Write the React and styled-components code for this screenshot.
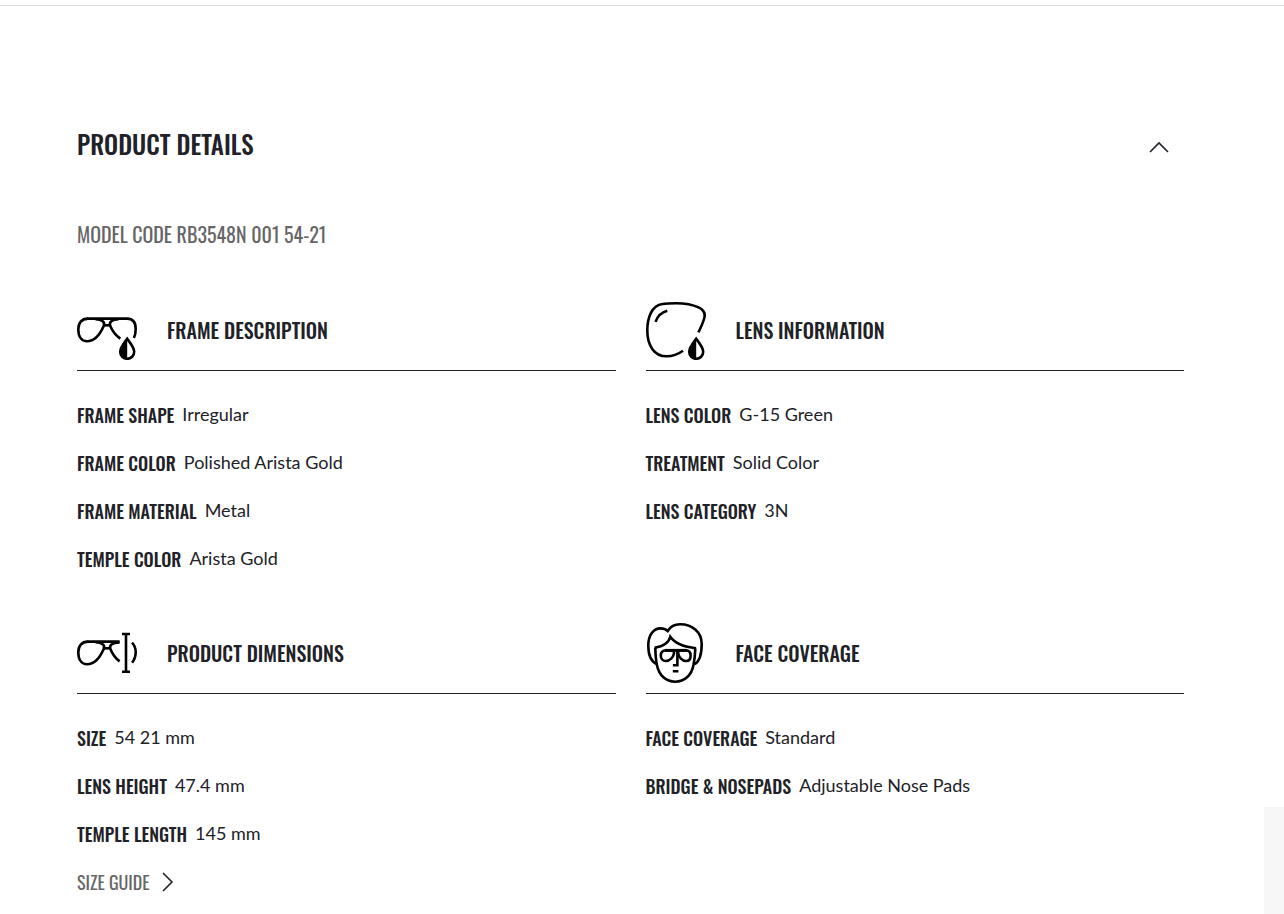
import React, { useState } from "react";
import styled, { createGlobalStyle } from "styled-components";

const frameDetails = [
  { label: "FRAME SHAPE", value: "Irregular" },
  { label: "FRAME COLOR", value: "Polished Arista Gold" },
  { label: "FRAME MATERIAL", value: "Metal" },
  { label: "TEMPLE COLOR", value: "Arista Gold" },
];

const lensDetails = [
  { label: "LENS COLOR", value: "G-15 Green" },
  { label: "TREATMENT", value: "Solid Color" },
  { label: "LENS CATEGORY", value: "3N" },
];

const dimensions = [
  { label: "SIZE", value: "54 21 mm" },
  { label: "LENS HEIGHT", value: "47.4 mm" },
  { label: "TEMPLE LENGTH", value: "145 mm" },
];

const coverage = [
  { label: "FACE COVERAGE", value: "Standard" },
  { label: "BRIDGE & NOSEPADS", value: "Adjustable Nose Pads" },
];

const Drop = () => (
  <g>
    <path d="M50.2 38.8C47.6 42.4 43.2 47.4 43.2 51.8a7 7 0 0 0 14 0c0-4.4-4.4-9.4-7-13z" />
    <path
      d="M50.2 38.8C47.6 42.4 43.2 47.4 43.2 51.8a7 7 0 0 0 7 7z"
      fill="#000"
      stroke="none"
    />
  </g>
);

const LeftLens = () => (
  <g>
    <path d="M11 18.6C4.6 18.6 1.3 23 1.3 29.4c0 7.2 3.4 11.9 8.8 11.9 8 0 12.6-6.2 16.6-15.3 1.7-4-1.600-6.400-8.200-6.800" />
    <path d="M26.400 25.300h7.200" />
  </g>
);

const FrameIcon = () => (
  <Icon viewBox="0 0 60 60" aria-hidden="true">
    <LeftLens />
    <path d="M10 18.6h40c6 0 8.700 4.400 8.700 10.400 0 3.600-.6 6.400-1.800 9" />
    <path d="M41.500 19.200c-6.600.4-9.900 2.800-8.200 6.800 2.400 6 5.700 9.600 10 12.600" />
    <Drop />
  </Icon>
);

const LensIcon = () => (
  <Icon viewBox="0 0 60 60" aria-hidden="true">
    <path d="M37 50.8c-5 3.6-10.4 5.5-16.3 5.500C7.500 56.300 1.300 44.500 1.300 30.500c0-12.500 4.200-25.100 15.200-26.500 4-.7 8.500-.8 13.500-.8 8.500 0 16.500 1.300 22.500 4.200 5.200 2.400 7.100 5.800 5.800 10.600-1.400 5.200-3.500 9.600-5.900 14.400" />
    <path d="M9.500 21.900c2-5.600 5.900-9.700 11.800-11.200" />
    <Drop />
  </Icon>
);

const DimensionsIcon = () => (
  <Icon viewBox="0 0 60 60" aria-hidden="true">
    <LeftLens />
    <path d="M10 18.6h32.6" />
    <path d="M42.6 19.400c-7 .2-10.800 2.600-9.200 6.600 2.200 5.600 5.200 9.300 9.200 12.400" />
    <path d="M49 11v38M45 11h8M45 48.800h8" />
    <path d="M55 19.6c2.600 2.700 3.700 5.600 3.700 9.400 0 4.200-1.300 7.800-3.600 10.800" />
  </Icon>
);

const FaceIcon = () => (
  <Icon viewBox="0 0 60 60" aria-hidden="true">
    <path d="M11 41C4.5 38.6 2.3 31 2.3 22.5 2.3 12 7.5 5.4 14.5 5.4c2.9 0 5.3.8 7.2 2.6 2.7-4.4 6.9-6.7 12.3-6.7C46.5 1.3 55.7 9.5 55.7 21c0 9-1.7 17.4-7.3 20.2" />
    <path d="M9.3 25c.2 6.8.6 12.2 1.6 17C13 52.5 20 58.700 29.2 58.700c9.3 0 16.3-6.200 18.3-16.700 1-4.800 1.600-10 1.800-16.600" />
    <path d="M8.5 24.9c8.8-1.5 14.3-4.7 15.8-11.1 4.7 6.8 13 10.2 25.8 11.4" />
    <path d="M19 27.4h22" strokeWidth="3" />
    <path d="M20.5 27.2c-3.7 0-5.7 2-5.7 5.2 0 3.4 2 5.6 5 5.6 4.2 0 7.4-3.8 8.2-7.6.4-2-1.5-3.2-4-3.2z" />
    <path d="M39.5 27.2c3.7 0 5.1 2 5.1 5.2 0 3.4-1.6 5.6-4.6 5.600-4 0-7-3.800-7.800-7.600-.4-2 1.100-3.200 3.600-3.200z" />
    <path d="M31.4 27v15.300h-4.500M26.800 48.300h5.600" />
  </Icon>
);

const DetailSection = ({ icon, title, rows, children }) => (
  <Section>
    <SectionHeader>
      {icon}
      <SectionTitle>{title}</SectionTitle>
    </SectionHeader>
    <DetailList>
      {rows.map((row) => (
        <DetailRow key={row.label}>
          <DetailLabel>{row.label}</DetailLabel>
          <DetailValue>{row.value}</DetailValue>
        </DetailRow>
      ))}
    </DetailList>
    {children}
  </Section>
);

const App = () => {
  const [open, setOpen] = useState(true);

  return (
    <>
      <GlobalStyle />
      <TopLine />
      <Details>
        <h2>
          <Toggle
            type="button"
            aria-expanded={open}
            onClick={() => setOpen(!open)}
          >
            PRODUCT DETAILS
            <ToggleArrow viewBox="0 0 20 18" $open={open} aria-hidden="true">
              <path d="M1 17l9-9 9 9" />
            </ToggleArrow>
          </Toggle>
        </h2>
        {open && (
          <>
            <ModelCode>MODEL CODE RB3548N 001 54-21</ModelCode>
            <Grid>
              <DetailSection
                icon={<FrameIcon />}
                title="FRAME DESCRIPTION"
                rows={frameDetails}
              />
              <DetailSection
                icon={<LensIcon />}
                title="LENS INFORMATION"
                rows={lensDetails}
              />
              <DetailSection
                icon={<DimensionsIcon />}
                title="PRODUCT DIMENSIONS"
                rows={dimensions}
              >
                <SizeGuide href="#size-guide">
                  SIZE GUIDE
                  <GuideArrow viewBox="0 0 12 20" aria-hidden="true">
                    <path d="M1 1l9 9-9 9" />
                  </GuideArrow>
                </SizeGuide>
              </DetailSection>
              <DetailSection
                icon={<FaceIcon />}
                title="FACE COVERAGE"
                rows={coverage}
              />
            </Grid>
          </>
        )}
      </Details>
      <SideTab />
    </>
  );
};

const condensed = `Oswald, "Liberation Sans Narrow", sans-serif`;

const GlobalStyle = createGlobalStyle`
  * {
    box-sizing: border-box;
  }

  body {
    margin: 0;
    background-color: #fff;
    color: #212227;
    font-family: Lato, sans-serif;
    overflow: hidden auto;
    scrollbar-width: none;
  }

  h2, h3, p, dl, dd {
    margin: 0;
  }
`;

const TopLine = styled.div`
  height: 6px;
  border-bottom: 1px solid #dedede;
`;

const Details = styled.main`
  padding: 114px 100px 0 77px;
`;

const Toggle = styled.button`
  display: flex;
  align-items: center;
  justify-content: space-between;
  width: 100%;
  padding: 0 15px 0 0;
  border: none;
  background: none;
  color: inherit;
  font-family: ${condensed};
  font-size: 25px;
  font-weight: 500;
  line-height: 48px;
  cursor: pointer;
`;

const ToggleArrow = styled.svg`
  width: 20px;
  height: 18px;
  fill: none;
  stroke: #212227;
  stroke-width: 1.6;
  transform: ${({ $open }) => ($open ? "none" : "rotate(180deg)")};
`;

const ModelCode = styled.p`
  margin: 51px 0;
  color: #666;
  font-family: ${condensed};
  font-size: 20px;
  line-height: 30px;
`;

const Grid = styled.div`
  display: grid;
  grid-template-columns: 1fr 1fr;
  gap: 40px 30px;
`;

const Section = styled.section`
  display: flex;
  flex-direction: column;
`;

const SectionHeader = styled.div`
  display: flex;
  align-items: center;
  gap: 30px;
  padding-bottom: 10px;
  border-bottom: 1px solid #212227;
`;

const Icon = styled.svg`
  width: 60px;
  height: 60px;
  fill: none;
  stroke: #000;
  stroke-width: 2.6;
`;

const SectionTitle = styled.h3`
  font-family: ${condensed};
  font-size: 20px;
  font-weight: 500;
  line-height: 30px;
`;

const DetailList = styled.dl`
  padding-top: 20px;
`;

const DetailRow = styled.div`
  display: flex;
  gap: 8px;
  height: 48px;
`;

const DetailLabel = styled.dt`
  font-family: ${condensed};
  font-size: 18px;
  font-weight: 500;
  line-height: 48px;
`;

const DetailValue = styled.dd`
  font-size: 18px;
  line-height: 46px;
`;

const SizeGuide = styled.a`
  display: flex;
  align-items: center;
  align-self: flex-start;
  gap: 12px;
  height: 48px;
  color: #666;
  font-family: ${condensed};
  font-size: 18px;
  text-decoration: none;
`;

const GuideArrow = styled.svg`
  width: 12px;
  height: 20px;
  fill: none;
  stroke: #212227;
  stroke-width: 1.6;
`;

const SideTab = styled.aside`
  position: fixed;
  right: 0;
  bottom: 0;
  width: 20px;
  height: 107px;
  background-color: #f7f7f7;
`;

export default App;
